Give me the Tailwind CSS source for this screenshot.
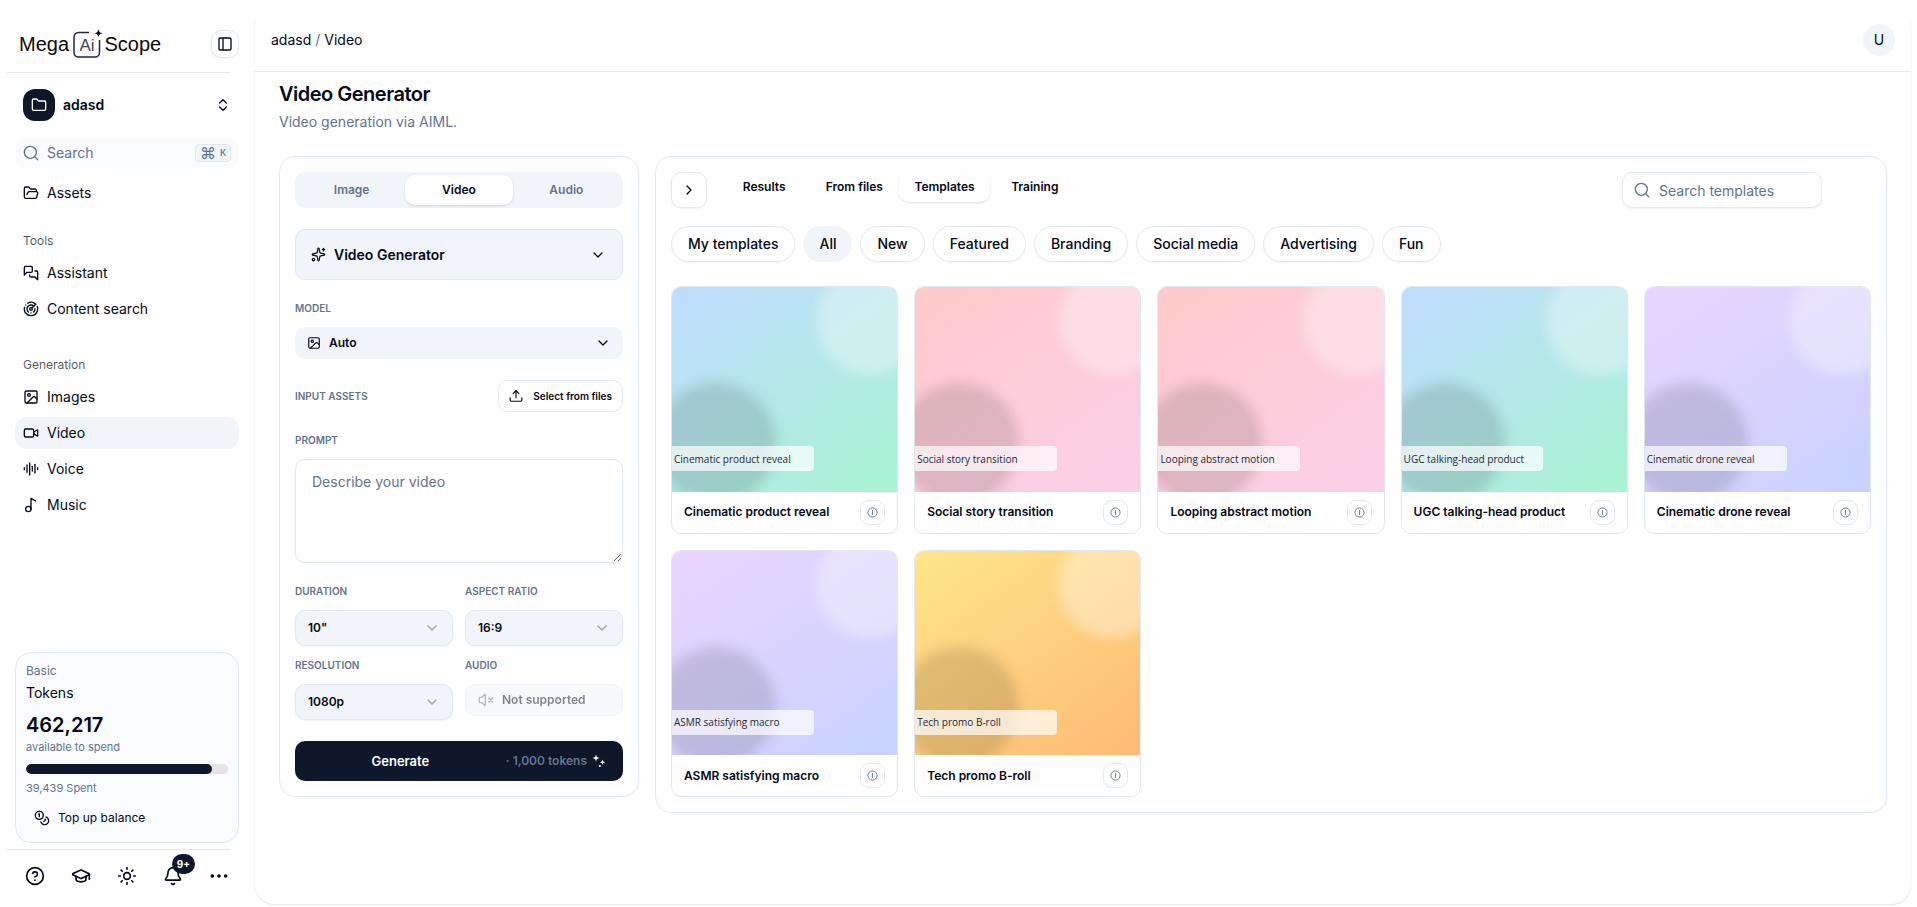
<!DOCTYPE html>
<html lang="en">

<head>
  <meta charset="UTF-8">
  <meta name="viewport" content="width=device-width, initial-scale=1.0">
  <title>Video Generator</title>
  <script src="https://cdn.jsdelivr.net/npm/@tailwindcss/browser@4"></script>
</head>

<body class="bg-white font-['Inter',sans-serif] text-sm text-[#020817]">
  <!-- icon sprite -->
  <svg class="hidden">
    <symbol id="i-panel" viewBox="0 0 24 24"><rect width="18" height="18" x="3" y="3" rx="2" /><path d="M9 3v18" /></symbol>
    <symbol id="i-folder" viewBox="0 0 24 24"><path d="M20 20a2 2 0 0 0 2-2V8a2 2 0 0 0-2-2h-7.9a2 2 0 0 1-1.69-.9L9.6 3.9A2 2 0 0 0 7.93 3H4a2 2 0 0 0-2 2v13a2 2 0 0 0 2 2Z" /></symbol>
    <symbol id="i-folder-open" viewBox="0 0 24 24"><path d="m6 14 1.5-2.9A2 2 0 0 1 9.24 10H20a2 2 0 0 1 1.94 2.5l-1.54 6a2 2 0 0 1-1.95 1.5H4a2 2 0 0 1-2-2V5a2 2 0 0 1 2-2h3.9a2 2 0 0 1 1.69.9l.81 1.2a2 2 0 0 0 1.67.9H18a2 2 0 0 1 2 2v2" /></symbol>
    <symbol id="i-updown" viewBox="0 0 24 24"><path d="m7 15 5 5 5-5" /><path d="m7 9 5-5 5 5" /></symbol>
    <symbol id="i-down" viewBox="0 0 24 24"><path d="m6 9 6 6 6-6" /></symbol>
    <symbol id="i-right" viewBox="0 0 24 24"><path d="m9 18 6-6-6-6" /></symbol>
    <symbol id="i-search" viewBox="0 0 24 24"><circle cx="11" cy="11" r="9" /><path d="m22 22-4.6-4.6" /></symbol>
    <symbol id="i-chat" viewBox="0 0 24 24"><path d="M14 9a2 2 0 0 1-2 2H6l-4 4V4a2 2 0 0 1 2-2h8a2 2 0 0 1 2 2z" /><path d="M18 9h2a2 2 0 0 1 2 2v11l-4-4h-6a2 2 0 0 1-2-2v-1" /></symbol>
    <symbol id="i-radar" viewBox="0 0 24 24"><path d="M19.07 4.93A10 10 0 0 0 6.99 3.34" /><path d="M4 6h.01" /><path d="M2.29 9.62A10 10 0 1 0 21.31 8.35" /><path d="M16.24 7.76A6 6 0 1 0 8.23 16.67" /><path d="M12 18h.01" /><path d="M17.99 11.66A6 6 0 0 1 15.77 16.67" /><circle cx="12" cy="12" r="2" /><path d="m13.41 10.59 5.66-5.66" /></symbol>
    <symbol id="i-image" viewBox="0 0 24 24"><rect width="18" height="18" x="3" y="3" rx="2" /><circle cx="9" cy="9" r="2" /><path d="m21 15-3.086-3.086a2 2 0 0 0-2.828 0L6 21" /></symbol>
    <symbol id="i-video" viewBox="0 0 24 24"><path d="m16 13 5.223 3.482a.5.5 0 0 0 .777-.416V7.87a.5.5 0 0 0-.752-.432L16 10.5" /><rect x="2" y="6" width="14" height="12" rx="2" /></symbol>
    <symbol id="i-audio" viewBox="0 0 24 24"><path d="M2 10v3" /><path d="M6 6v11" /><path d="M10 3v18" /><path d="M14 8v7" /><path d="M18 5v13" /><path d="M22 10v3" /></symbol>
    <symbol id="i-music" viewBox="0 0 24 24"><circle cx="8" cy="18" r="4" /><path d="M12 18V2l7 4" /></symbol>
    <symbol id="i-coins" viewBox="0 0 24 24"><circle cx="8" cy="8" r="6" /><path d="M18.09 10.37A6 6 0 1 1 10.34 18" /><path d="M7 6h1v4" /><path d="m16.71 13.88.7.71-2.82 2.82" /></symbol>
    <symbol id="i-help" viewBox="0 0 24 24"><circle cx="12" cy="12" r="10" /><path d="M9.09 9a3 3 0 0 1 5.83 1c0 2-3 3-3 3" /><path d="M12 17h.01" /></symbol>
    <symbol id="i-cap" viewBox="0 0 24 24"><path d="M21.42 10.922a1 1 0 0 0-.019-1.838L12.83 5.18a2 2 0 0 0-1.66 0L2.6 9.08a1 1 0 0 0 0 1.832l8.57 3.908a2 2 0 0 0 1.66 0z" /><path d="M22 10v6" /><path d="M6 12.5V16a6 3 0 0 0 12 0v-3.5" /></symbol>
    <symbol id="i-sun" viewBox="0 0 24 24"><circle cx="12" cy="12" r="4" /><path d="M12 2v2M12 20v2M4.93 4.93l1.41 1.41M17.66 17.66l1.41 1.41M2 12h2M20 12h2M6.34 17.66l-1.41 1.41M19.07 4.93l-1.41 1.41" /></symbol>
    <symbol id="i-bell" viewBox="0 0 24 24"><path d="M10.268 21a2 2 0 0 0 3.464 0" /><path d="M3.262 15.326A1 1 0 0 0 4 17h16a1 1 0 0 0 .74-1.673C19.41 13.956 18 12.499 18 8A6 6 0 0 0 6 8c0 4.499-1.411 5.956-2.738 7.326" /></symbol>
    <symbol id="i-more" viewBox="0 0 24 24"><g fill="currentColor"><circle cx="4" cy="12" r="1.2" /><circle cx="12" cy="12" r="1.2" /><circle cx="20" cy="12" r="1.2" /></g></symbol>
    <symbol id="i-sparkles" viewBox="0 0 24 24"><path d="M11.017 2.814a1 1 0 0 1 1.966 0l1.051 5.558a2 2 0 0 0 1.594 1.594l5.558 1.051a1 1 0 0 1 0 1.966l-5.558 1.051a2 2 0 0 0-1.594 1.594l-1.051 5.558a1 1 0 0 1-1.966 0l-1.051-5.558a2 2 0 0 0-1.594-1.594l-5.558-1.051a1 1 0 0 1 0-1.966l5.558-1.051a2 2 0 0 0 1.594-1.594z" /><path d="M20 2v4" /><path d="M22 4h-4" /><circle cx="4" cy="20" r="2" /></symbol>
    <symbol id="i-upload" viewBox="0 0 24 24"><path d="M12 3v12" /><path d="m17 8-5-5-5 5" /><path d="M22 15v4a2 2 0 0 1-2 2H4a2 2 0 0 1-2-2v-4" /></symbol>
    <symbol id="i-mute" viewBox="0 0 24 24"><path d="M11 4.702a.705.705 0 0 0-1.203-.498L6.413 7.587A1.4 1.4 0 0 1 5.416 8H3a1 1 0 0 0-1 1v6a1 1 0 0 0 1 1h2.416a1.4 1.4 0 0 1 .997.413l3.383 3.384A.705.705 0 0 0 11 19.298z" /><path d="m22 9-6 6M16 9l6 6" /></symbol>
    <symbol id="i-info" viewBox="0 0 24 24"><circle cx="12" cy="12" r="10" /><path d="M12 17V7" /></symbol>
  </svg>

  <div class="flex min-h-screen">
    <!-- Sidebar -->
    <aside class="flex w-[255px] shrink-0 flex-col">
      <div class="flex h-[72px] items-end justify-between pr-4 pb-[14px] pl-5">
        <a href="#" aria-label="Mega Ai Scope">
          <svg class="h-[30px] w-[144px]" viewBox="0 0 144 30" fill="none">
            <text x="-1" y="23" font-family="Liberation Sans, Arial, sans-serif" font-size="20" fill="#0a0a0a">Mega</text>
            <path d="M69 4.5H58.5a4.500 4.500 0 0 0-4.500 4.500v15.500a4.500 4.500 0 0 0 4.500 4.500h16.500a4.500 4.500 0 0 0 4.500-4.500V12" stroke="#1e293b" stroke-width="1.500" />
            <text x="59.500" y="23" font-family="Liberation Sans, Arial, sans-serif" font-size="17" fill="#444">Ai</text>
            <path d="M78.500 1c.5 3 1.300 3.800 4.300 4.300-3 .5-3.800 1.300-4.300 4.300-.5-3-1.300-3.800-4.300-4.300 3-.5 3.800-1.300 4.300-4.300z" fill="#0a0a0a" />
            <text x="84.500" y="23" font-family="Liberation Sans, Arial, sans-serif" font-size="20" fill="#0a0a0a">Scope</text>
          </svg>
        </a>
        <button aria-label="Toggle sidebar" class="flex size-7 items-center justify-center rounded-[10px] border border-slate-200 shadow-xs">
          <svg class="size-4 fill-none stroke-current stroke-2"><use href="#i-panel" /></svg>
        </button>
      </div>
      <hr class="mr-6 ml-[7px] border-slate-200">

      <button class="mt-4 mr-4 ml-[15px] flex h-8 items-center gap-2 px-2 text-left">
        <span class="flex size-8 items-center justify-center rounded-xl bg-slate-900 text-white">
          <svg class="size-4 fill-none stroke-current stroke-2 [stroke-linecap:round] [stroke-linejoin:round]"><use href="#i-folder" /></svg>
        </span>
        <span class="flex-1 font-semibold">adasd</span>
        <svg class="size-4 fill-none stroke-current stroke-2 [stroke-linecap:round] [stroke-linejoin:round]"><use href="#i-updown" /></svg>
      </button>

      <button class="mt-4 mr-4 ml-[15px] flex h-8 items-center gap-2 rounded-xl bg-slate-50/70 px-2 text-left text-slate-500">
        <svg class="size-4 fill-none stroke-current stroke-2 [stroke-linecap:round]"><use href="#i-search" /></svg>
        <span class="flex-1">Search</span>
        <kbd class="flex h-[18px] w-9 items-center justify-center gap-1 rounded border border-slate-200 bg-slate-100 font-['Inter',sans-serif] text-[9px] font-medium"><span class="text-base leading-none font-normal">⌘</span>K</kbd>
      </button>

      <nav class="mt-2 mr-4 ml-[15px] [&_svg]:size-4 [&_svg]:fill-none [&_svg]:stroke-current [&_svg]:stroke-2 [&_svg]:[stroke-linecap:round] [&_svg]:[stroke-linejoin:round]">
        <a href="#" class="flex h-8 items-center gap-2 rounded-xl px-2"><svg><use href="#i-folder-open" /></svg>Assets</a>

        <h2 class="mt-4 flex h-8 items-center px-2 text-xs text-[#020817]/70">Tools</h2>
        <div class="flex flex-col gap-1">
          <a href="#" class="flex h-8 items-center gap-2 rounded-xl px-2"><svg><use href="#i-chat" /></svg>Assistant</a>
          <a href="#" class="flex h-8 items-center gap-2 rounded-xl px-2"><svg><use href="#i-radar" /></svg>Content search</a>
        </div>

        <h2 class="mt-6 flex h-8 items-center px-2 text-xs text-[#020817]/70">Generation</h2>
        <div class="flex flex-col gap-1">
          <a href="#" class="flex h-8 items-center gap-2 rounded-xl px-2"><svg><use href="#i-image" /></svg>Images</a>
          <a href="#" class="flex h-8 items-center gap-2 rounded-xl bg-slate-100 px-2"><svg><use href="#i-video" /></svg>Video</a>
          <a href="#" class="flex h-8 items-center gap-2 rounded-xl px-2"><svg><use href="#i-audio" /></svg>Voice</a>
          <a href="#" class="flex h-8 items-center gap-2 rounded-xl px-2"><svg><use href="#i-music" /></svg>Music</a>
        </div>
      </nav>

      <section class="mt-auto mr-4 ml-[15px] rounded-2xl border border-slate-200 bg-slate-50/70 px-[10px] pt-[10px] pb-2">
        <p class="text-xs text-slate-500">Basic</p>
        <p class="mt-1 leading-5">Tokens</p>
        <p class="mt-2 text-xl leading-7 font-semibold">462,217</p>
        <p class="text-[11px] leading-4 text-slate-500">available to spend</p>
        <div class="mt-[9px] h-[10px] overflow-hidden rounded-full bg-zinc-200">
          <div class="h-full rounded-full bg-slate-900" style="width: 92%"></div>
        </div>
        <p class="mt-[6px] text-[11px] leading-4 text-slate-500">39,439 Spent</p>
        <button class="mt-[6px] flex h-8 items-center gap-2 px-2 text-xs">
          <svg class="size-4 fill-none stroke-current stroke-2 [stroke-linecap:round] [stroke-linejoin:round]"><use href="#i-coins" /></svg>
          Top up balance
        </button>
      </section>
      <hr class="mt-[6px] mr-6 ml-[7px] border-slate-200">
      <div class="flex gap-[14px] pt-[10px] pb-[15px] pl-[19px] [&_button]:flex [&_button]:size-8 [&_button]:items-center [&_button]:justify-center [&_svg]:size-5 [&_svg]:fill-none [&_svg]:stroke-current [&_svg]:stroke-2 [&_svg]:[stroke-linecap:round] [&_svg]:[stroke-linejoin:round]">
        <button aria-label="Help"><svg><use href="#i-help" /></svg></button>
        <button aria-label="Tutorials"><svg><use href="#i-cap" /></svg></button>
        <button aria-label="Theme"><svg><use href="#i-sun" /></svg></button>
        <button aria-label="Notifications" class="relative">
          <svg><use href="#i-bell" /></svg>
          <span class="absolute -top-1.5 -right-1.5 flex h-5 items-center rounded-full bg-slate-900 px-[5px] text-[10px] font-bold text-white">9+</span>
        </button>
        <button aria-label="More"><svg><use href="#i-more" /></svg></button>
      </div>
    </aside>

    <!-- Main panel -->
    <main class="mt-2 mr-[6px] mb-[3px] min-w-0 flex-1 rounded-[20px] shadow-[0_1px_2px_rgba(0,0,0,0.12)]">
      <header class="flex h-16 items-center justify-between border-b border-slate-200 px-4">
        <nav class="flex gap-1"><a href="#">adasd</a><span class="text-slate-500">/</span><a href="#">Video</a></nav>
        <button aria-label="Account" class="flex size-8 items-center justify-center rounded-full bg-slate-100">U</button>
      </header>

      <div class="px-6 pt-2 pb-6">
        <h1 class="text-xl leading-7 font-semibold tracking-tight">Video Generator</h1>
        <p class="mt-1 leading-5 text-slate-500">Video generation via AIML.</p>

        <div class="mt-6 flex items-start gap-4">
          <!-- Settings form -->
          <form class="flex w-[360px] shrink-0 flex-col gap-[21px] rounded-2xl border border-slate-200 p-[15px]">
            <div class="grid h-9 grid-cols-3 rounded-[10px] bg-slate-100 p-[3px] text-xs font-semibold text-slate-500">
              <button type="button">Image</button>
              <button type="button" class="rounded-[10px] bg-white text-[#020817] shadow-sm">Video</button>
              <button type="button">Audio</button>
            </div>

            <div class="relative">
              <svg class="pointer-events-none absolute top-[18px] left-4 size-[15px] fill-none stroke-current stroke-2 [stroke-linecap:round] [stroke-linejoin:round]"><use href="#i-sparkles" /></svg>
              <select aria-label="Generator" class="h-[51px] w-full appearance-none rounded-[10px] border border-slate-200 bg-slate-100 pr-10 pl-[38px] font-semibold">
                <option>Video Generator</option>
              </select>
              <svg class="pointer-events-none absolute top-[18px] right-[17px] size-4 fill-none stroke-current stroke-2 [stroke-linecap:round] [stroke-linejoin:round]"><use href="#i-down" /></svg>
            </div>

            <div class="flex flex-col gap-[11px]">
              <label for="model" class="text-[10px] leading-[15px] font-semibold text-slate-500">MODEL</label>
              <div class="relative">
                <svg class="pointer-events-none absolute top-[9px] left-3 size-[14px] fill-none stroke-current stroke-2"><use href="#i-image" /></svg>
                <select id="model" class="h-8 w-full appearance-none rounded-[10px] bg-slate-100 pr-10 pl-[34px] text-xs font-semibold">
                  <option>Auto</option>
                </select>
                <svg class="pointer-events-none absolute top-2 right-3 size-4 fill-none stroke-current stroke-2 [stroke-linecap:round] [stroke-linejoin:round]"><use href="#i-down" /></svg>
              </div>
            </div>

            <div class="flex items-center justify-between">
              <span class="text-[10px] leading-[15px] font-semibold text-slate-500">INPUT ASSETS</span>
              <button type="button" class="flex h-8 items-center gap-[10px] rounded-[10px] border border-slate-200 px-[10px] text-[10px] font-semibold">
                <svg class="size-[14px] fill-none stroke-current stroke-2 [stroke-linecap:round] [stroke-linejoin:round]"><use href="#i-upload" /></svg>
                Select from files
              </button>
            </div>

            <div class="flex flex-col gap-[11px]">
              <label for="prompt" class="text-[10px] leading-[15px] font-semibold text-slate-500">PROMPT</label>
              <textarea id="prompt" placeholder="Describe your video" class="block h-[104px] w-full rounded-[10px] border border-slate-200 px-4 py-3 leading-5 shadow-xs placeholder:text-slate-500"></textarea>
            </div>

            <div class="grid grid-cols-2 gap-3">
              <div class="flex flex-col gap-[11px]">
                <label for="duration" class="text-[10px] leading-[15px] font-semibold text-slate-500">DURATION</label>
                <div class="relative">
                  <select id="duration" class="h-9 w-full appearance-none rounded-[10px] border border-slate-200 bg-slate-100 px-3 text-xs font-semibold shadow-xs">
                    <option>10"</option>
                  </select>
                  <svg class="pointer-events-none absolute top-[10px] right-[13px] size-4 fill-none stroke-slate-400 stroke-2 [stroke-linecap:round] [stroke-linejoin:round]"><use href="#i-down" /></svg>
                </div>
              </div>
              <div class="flex flex-col gap-[11px]">
                <label for="ratio" class="text-[10px] leading-[15px] font-semibold text-slate-500">ASPECT RATIO</label>
                <div class="relative">
                  <select id="ratio" class="h-9 w-full appearance-none rounded-[10px] border border-slate-200 bg-slate-100 px-3 text-xs font-semibold shadow-xs">
                    <option>16:9</option>
                  </select>
                  <svg class="pointer-events-none absolute top-[10px] right-[13px] size-4 fill-none stroke-slate-400 stroke-2 [stroke-linecap:round] [stroke-linejoin:round]"><use href="#i-down" /></svg>
                </div>
              </div>
              <div class="flex flex-col gap-[11px]">
                <label for="resolution" class="text-[10px] leading-[15px] font-semibold text-slate-500">RESOLUTION</label>
                <div class="relative">
                  <select id="resolution" class="h-9 w-full appearance-none rounded-[10px] border border-slate-200 bg-slate-100 px-3 text-xs font-semibold shadow-xs">
                    <option>1080p</option>
                  </select>
                  <svg class="pointer-events-none absolute top-[10px] right-[13px] size-4 fill-none stroke-slate-400 stroke-2 [stroke-linecap:round] [stroke-linejoin:round]"><use href="#i-down" /></svg>
                </div>
              </div>
              <div class="flex flex-col gap-[11px]">
                <label for="audio" class="text-[10px] leading-[15px] font-semibold text-slate-500">AUDIO</label>
                <button type="button" id="audio" disabled class="flex h-8 items-center gap-2 rounded-[10px] border border-slate-200 bg-slate-100 px-3 text-xs font-semibold opacity-50">
                  <svg class="size-4 fill-none stroke-slate-500 stroke-2 [stroke-linecap:round] [stroke-linejoin:round]"><use href="#i-mute" /></svg>
                  Not supported
                </button>
              </div>
            </div>

            <button type="submit" class="grid h-10 grid-cols-[1fr_auto] items-center rounded-[10px] bg-slate-900 pr-4 text-[13px] font-semibold text-white">
              <span>Generate</span>
              <span class="flex items-center gap-1 text-xs text-slate-500">· 1,000 tokens
                <svg class="size-4 fill-white" viewBox="0 0 16 16"><path d="M5 1.500 5.900 4.100 8.500 5 5.900 5.900 5 8.500 4.100 5.900 1.500 5 4.100 4.100zM11.500 6.500l.7 2 2 .7-2 .7-.7 2-.7-2-2-.7 2-.7z" /><circle cx="8.800" cy="13" r="1.100" /></svg>
              </span>
            </button>
          </form>

          <!-- Templates -->
          <section class="min-w-0 flex-1 rounded-2xl border border-slate-200 p-[15px]">
            <div class="flex items-start">
              <button aria-label="Collapse" class="flex size-9 items-center justify-center rounded-[10px] border border-slate-200 shadow-xs">
                <svg class="size-4 fill-none stroke-current stroke-2 [stroke-linecap:round] [stroke-linejoin:round]"><use href="#i-right" /></svg>
              </button>
              <div class="ml-3 inline-grid h-[30px] grid-cols-4 text-xs font-semibold">
                <button class="px-[15px]">Results</button>
                <button class="px-[15px]">From files</button>
                <button class="rounded-[10px] px-[15px] shadow-sm">Templates</button>
                <button class="px-[15px]">Training</button>
              </div>
              <div class="relative mr-[49px] ml-auto">
                <svg class="pointer-events-none absolute top-[10px] left-3 size-4 fill-none stroke-slate-500 stroke-2 [stroke-linecap:round]"><use href="#i-search" /></svg>
                <input type="search" aria-label="Search templates" placeholder="Search templates" class="h-9 w-[200px] rounded-[10px] border border-slate-200 pr-3 pl-9 shadow-xs placeholder:text-slate-500">
              </div>
            </div>

            <div class="mt-[18px] flex flex-wrap gap-2 font-medium">
              <button class="h-9 rounded-full border border-slate-200 px-4 shadow-xs">My templates</button>
              <button class="h-9 rounded-full bg-slate-100 px-4">All</button>
              <button class="h-9 rounded-full border border-slate-200 px-4 shadow-xs">New</button>
              <button class="h-9 rounded-full border border-slate-200 px-4 shadow-xs">Featured</button>
              <button class="h-9 rounded-full border border-slate-200 px-4 shadow-xs">Branding</button>
              <button class="h-9 rounded-full border border-slate-200 px-4 shadow-xs">Social media</button>
              <button class="h-9 rounded-full border border-slate-200 px-4 shadow-xs">Advertising</button>
              <button class="h-9 rounded-full border border-slate-200 px-4 shadow-xs">Fun</button>
            </div>

            <div id="templates" class="mt-6 grid grid-cols-5 gap-4"></div>
          </section>
        </div>
      </div>
    </main>
  </div>

  <script>
    const templates = [
      { name: "Cinematic product reveal", bg: "from-[#bfdbfe] to-[#a7f3d0]" },
      { name: "Social story transition", bg: "from-[#fecaca] to-[#fbcfe8]" },
      { name: "Looping abstract motion", bg: "from-[#fecaca] to-[#fbcfe8]" },
      { name: "UGC talking-head product", bg: "from-[#bfdbfe] to-[#a7f3d0]" },
      { name: "Cinematic drone reveal", bg: "from-[#e9d5ff] to-[#c7d2fe]" },
      { name: "ASMR satisfying macro", bg: "from-[#e9d5ff] to-[#c7d2fe]" },
      { name: "Tech promo B-roll", bg: "from-[#fde68a] to-[#fdba74]" },
    ];

    document.getElementById("templates").innerHTML = templates.map((t) => `
      <article class="overflow-hidden rounded-[10px] border border-slate-200">
        <div class="relative aspect-[11/10] overflow-hidden bg-linear-145 ${t.bg}">
          <div class="absolute -top-[10%] left-[64%] aspect-square w-[48%] rounded-full bg-white/35 blur-[6px]"></div>
          <div class="absolute top-[47%] -left-[7%] aspect-square w-[53%] rounded-full bg-black/12 blur-[6px]"></div>
          <p class="absolute bottom-[10%] left-0 flex h-[25px] w-[63%] items-center rounded-r bg-white/70 pl-[2px] font-['Open_Sans',sans-serif] text-[10px] whitespace-nowrap text-slate-800">${t.name}</p>
        </div>
        <div class="flex h-[41px] items-center justify-between px-3">
          <h3 class="truncate text-xs font-semibold">${t.name}</h3>
          <button aria-label="About ${t.name}" class="flex size-[25px] items-center justify-center rounded-[9px] border border-slate-200">
            <svg class="size-[11px] fill-none stroke-slate-500 stroke-2"><use href="#i-info" /></svg>
          </button>
        </div>
      </article>`).join("");
  </script>
</body>

</html>
